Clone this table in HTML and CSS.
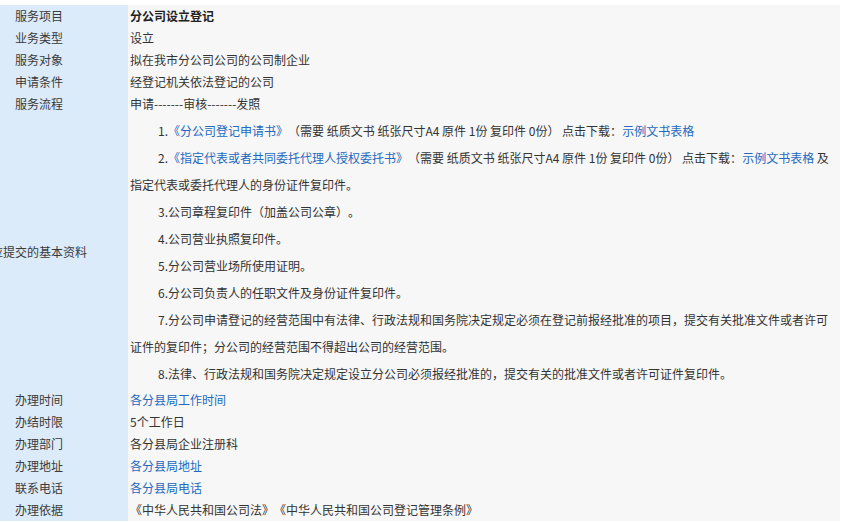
FILE: index.html
```html
<!DOCTYPE html>
<html lang="zh-CN">
<head>
<meta charset="utf-8">
<title>分公司设立登记</title>
<link rel="stylesheet" href="styles.css">
</head>
<body>
<div class="page">
<table class="info">
  <tr><th>服务项目</th><td class="title">分公司设立登记</td></tr>
  <tr><th>业务类型</th><td>设立</td></tr>
  <tr><th>服务对象</th><td>拟在我市分公司公司的公司制企业</td></tr>
  <tr><th>申请条件</th><td>经登记机关依法登记的公司</td></tr>
  <tr><th>服务流程</th><td>申请-------审核-------发照</td></tr>
  <tr class="materials">
    <th><span class="clip">应提交的基本资料</span></th>
    <td>
      <p>1.<a href="#">《分公司登记申请书》</a>（需要 纸质文书 纸张尺寸A4 原件 1份 复印件 0份） 点击下载：<a href="#">示例文书表格</a></p>
      <p>2.<a href="#">《指定代表或者共同委托代理人授权委托书》</a>（需要 纸质文书 纸张尺寸A4 原件 1份 复印件 0份） 点击下载：<a href="#">示例文书表格</a> 及指定代表或委托代理人的身份证件复印件。</p>
      <p>3.公司章程复印件（加盖公司公章）。</p>
      <p>4.公司营业执照复印件。</p>
      <p>5.分公司营业场所使用证明。</p>
      <p>6.分公司负责人的任职文件及身份证件复印件。</p>
      <p>7.分公司申请登记的经营范围中有法律、行政法规和国务院决定规定必须在登记前报经批准的项目，提交有关批准文件或者许可证件的复印件；分公司的经营范围不得超出公司的经营范围。</p>
      <p>8.法律、行政法规和国务院决定规定设立分公司必须报经批准的，提交有关的批准文件或者许可证件复印件。</p>
    </td>
  </tr>
  <tr><th>办理时间</th><td><a href="#">各分县局工作时间</a></td></tr>
  <tr><th>办结时限</th><td>5个工作日</td></tr>
  <tr><th>办理部门</th><td>各分县局企业注册科</td></tr>
  <tr><th>办理地址</th><td><a href="#">各分县局地址</a></td></tr>
  <tr><th>联系电话</th><td><a href="#">各分县局电话</a></td></tr>
  <tr><th>办理依据</th><td>《中华人民共和国公司法》《中华人民共和国公司登记管理条例》</td></tr>
</table>
</div>
</body>
</html>
```

FILE: styles.css
```css
html, body {
  margin: 0;
  padding: 0;
  background: #ffffff;
}

body {
  font-family: "Microsoft YaHei", "Noto Sans CJK SC", "Noto Sans", sans-serif;
  font-size: 12px;
  color: #333333;
  overflow: hidden;
  text-spacing-trim: space-all;
}

.page {
  padding-top: 5px;
}

.info {
  width: 840px;
  border-collapse: collapse;
  border-spacing: 0;
}

.info th,
.info td {
  height: 22px;
  line-height: 22px;
  padding: 0;
  vertical-align: middle;
  text-align: left;
  font-weight: normal;
}

.info th {
  width: 113px;
  padding-left: 15px;
  background: #dcebfa;
  color: #3a3a3a;
  white-space: nowrap;
}

.info td {
  background: #f7f7f7;
  padding-left: 2px;
  padding-right: 2px;
}

.info td.title {
  font-weight: bold;
  color: #222222;
}

.info a {
  color: #2369c0;
  text-decoration: none;
}

.materials td {
  padding-top: 2px;
  padding-bottom: 2px;
}

.materials p {
  margin: 0;
  line-height: 27px;
  text-indent: 28px;
}

.clip {
  display: block;
  text-indent: -24px;
}
```
